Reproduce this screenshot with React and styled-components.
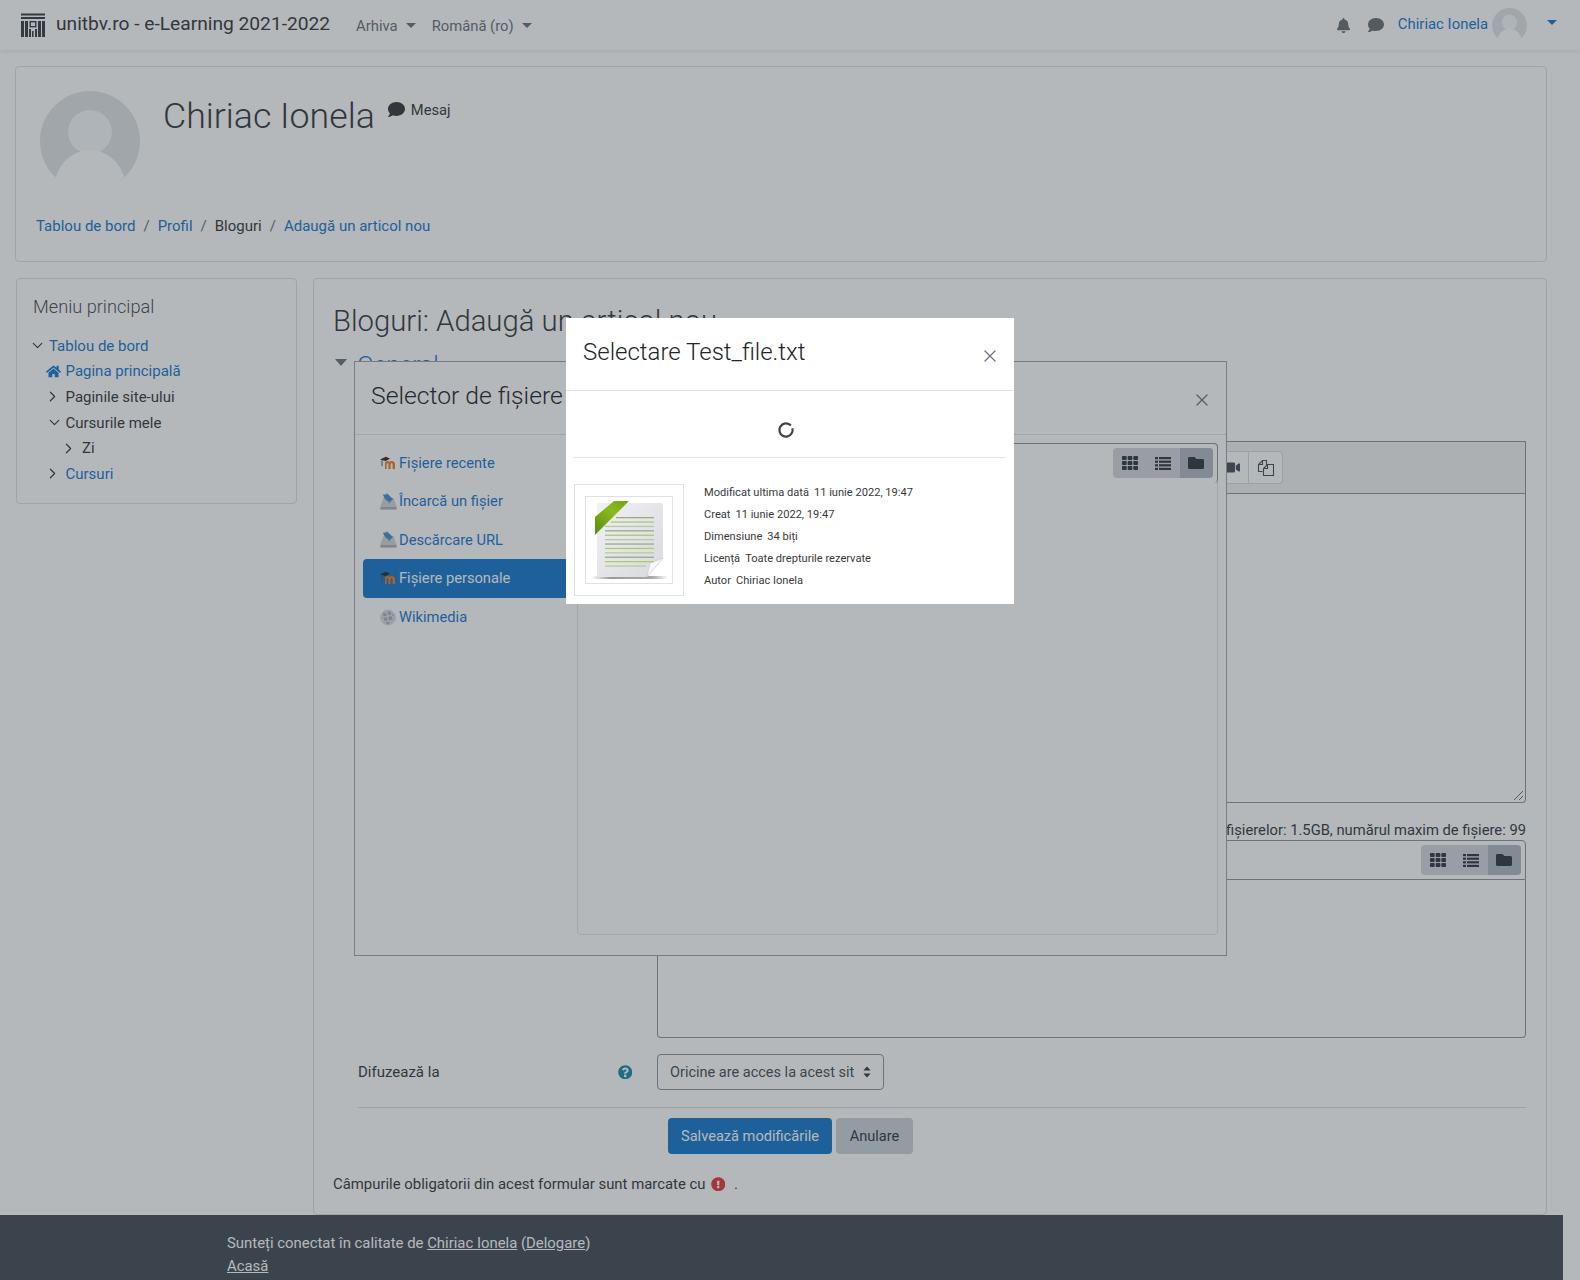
import React from "react";
import styled, { createGlobalStyle } from "styled-components";
import {
  FaBell,
  FaComment,
  FaHome,
  FaTh,
  FaFolder,
  FaVideo,
  FaQuestionCircle,
  FaExclamationCircle,
} from "react-icons/fa";
import { ChevronDown, ChevronRight, X } from "lucide-react";

const GlobalStyle = createGlobalStyle`
  html, body {
    margin: 0;
    padding: 0;
    background: #fff;
    height: 1280px;
    overflow: hidden;
  }
  body {
    font-family: "Roboto", "Liberation Sans", sans-serif;
    font-size: 15px;
    color: #373a3c;
  }
  * { box-sizing: border-box; }
`;

const LINK = "#1a78cc";

const Page = styled.div`
  position: relative;
  width: 1580px;
  height: 1280px;
  overflow: hidden;
`;

const Navbar = styled.nav`
  display: flex;
  align-items: center;
  height: 50px;
  padding: 0 23px 0 21px;
  background: #fff;
  box-shadow: 0 2px 4px rgba(0, 0, 0, 0.08);
`;

const Brand = styled.span`
  margin-left: 11px;
  font-size: 19.2px;
  color: #373a3c;
  margin-top: -3px;
`;

const NavMenu = styled.span`
  display: inline-flex;
  align-items: center;
  margin-left: ${(p) => p.$gap}px;
  font-size: 14.8px;
  color: #6a737b;
  margin-top: 1px;
`;

const Caret = styled.i`
  display: inline-block;
  width: 0;
  height: 0;
  margin-left: 8px;
  border-left: 5px solid transparent;
  border-right: 5px solid transparent;
  border-top: 5px solid ${(p) => p.$color || "#6a737b"};
  margin-top: ${(p) => p.$top || 0}px;
`;

const NavRight = styled.div`
  display: flex;
  align-items: center;
  margin-left: auto;
`;

const NavIcon = styled.span`
  display: inline-flex;
  margin-right: ${(p) => p.$gap}px;
  color: #6a6f74;
  font-size: ${(p) => p.$size}px;
`;

const UserName = styled.a`
  font-size: 14.9px;
  color: ${LINK};
  margin-top: -3px;
`;

const NavAvatar = styled.span`
  display: inline-flex;
  margin: 0 12px 0 4px;
`;

const Content = styled.div`
  width: 1563px;
  padding: 16px 16px 0 15px;
`;

const Card = styled.div`
  background: #fff;
  border: 1px solid #dcdfe2;
  border-radius: 4px;
`;

const HeaderCard = styled(Card)`
  height: 196px;
  padding: 24px 24px 0 20px;
`;

const HeaderTop = styled.div`
  display: flex;
  align-items: flex-start;
  padding-left: 4px;
  height: 124px;
`;

const UserTitle = styled.h1`
  margin: 3px 0 0 23px;
  font-size: 35.7px;
  line-height: 44px;
  font-weight: 300;
  color: #373a3c;
`;

const MessageLink = styled.span`
  display: inline-flex;
  align-items: center;
  margin: 10px 0 0 13px;
  font-size: 14.7px;
  color: #373a3c;
  svg {
    font-size: 17px;
    margin-right: 6px;
    margin-top: -2px;
  }
`;

const Breadcrumb = styled.div`
  display: flex;
  align-items: center;
  margin-top: 2px;
  font-size: 15px;
`;

const Crumb = styled.a`
  color: ${(p) => (p.$plain ? "#373a3c" : LINK)};
`;

const Slash = styled.span`
  margin: 0 8px;
  color: #6c757d;
`;

const Columns = styled.div`
  display: flex;
  align-items: flex-start;
  gap: 16px;
  margin-top: 16px;
`;

const SideCard = styled(Card)`
  width: 281px;
  height: 226px;
  margin-left: 1px;
  padding: 15px 16px 0;
`;

const SideTitle = styled.h5`
  margin: 0 0 13px;
  font-size: 18.2px;
  line-height: 26px;
  font-weight: 300;
  color: #495057;
`;

const TreeRow = styled.div`
  display: flex;
  align-items: center;
  height: 25.6px;
  padding-left: ${(p) => p.$level * 16.5}px;
  font-size: 15px;
  color: ${(p) => (p.$link ? LINK : "#373a3c")};
`;

const TreeIcon = styled.span`
  display: inline-flex;
  width: 16px;
  color: #373a3c;
  svg {
    flex: none;
    margin-left: ${(p) => (p.$right ? -6 : -4)}px;
  }
`;

const HomeIcon = styled.span`
  display: inline-flex;
  width: 16px;
  margin-left: -4px;
  margin-right: 4px;
  font-size: 15px;
  color: ${LINK};
`;

const MainCard = styled(Card)`
  flex: 1;
  height: 937px;
  padding: 22px 20px 0 19px;
`;

const PageTitle = styled.h2`
  margin: 0;
  font-size: 29.3px;
  line-height: 40px;
  font-weight: 300;
  color: #373a3c;
`;

const SectionHead = styled.div`
  display: flex;
  align-items: center;
  height: 34px;
  margin-top: 6px;
  font-size: 24.4px;
  font-weight: 300;
  color: ${LINK};
`;

const SectionCaret = styled.i`
  width: 0;
  height: 0;
  margin: -4px 10px 0 2px;
  border-left: 6px solid transparent;
  border-right: 6px solid transparent;
  border-top: 7px solid #6c757d;
`;

const FormBody = styled.div`
  padding-left: 25px;
`;

const FormRow = styled.div`
  display: grid;
  grid-template-columns: 299px 1fr;
  margin-top: ${(p) => p.$top || 0}px;
`;

const EditorToolbar = styled.div`
  display: flex;
  height: 53px;
  padding: 9px 0 0 558px;
  background: #f3f3f3;
  border: 1px solid #8f9499;
`;

const ToolGroup = styled.div`
  display: flex;
  height: 33px;
  background: #fff;
  border: 1px solid #d8dadd;
  border-radius: 4px;
`;

const ToolButton = styled.span`
  display: inline-flex;
  align-items: center;
  justify-content: center;
  width: ${(p) => p.$w}px;
  color: #495057;
  font-size: 15px;
  & + & {
    border-left: 1px solid #d8dadd;
  }
`;

const EditArea = styled.div`
  position: relative;
  height: 309px;
  border: 1px solid #8f9499;
  border-top: 0;
  border-radius: 0 0 4px 4px;
`;

const Grip = styled.svg`
  position: absolute;
  right: 1px;
  bottom: 1px;
`;

const LimitNote = styled.div`
  margin-top: 17px;
  height: 20px;
  line-height: 20px;
  text-align: right;
  font-size: 14.75px;
  color: #373a3c;
`;

const FileToolbar = styled.div`
  display: flex;
  justify-content: flex-end;
  align-items: center;
  height: 40px;
  padding-right: 4px;
  border: 1px solid #8f9499;
  border-radius: 4px 4px 0 0;
`;

const ViewGroup = styled.div`
  display: flex;
  height: 30px;
  border-radius: 4px;
  overflow: hidden;
  background: #d4d8dc;
`;

const ViewButton = styled.span`
  display: inline-flex;
  align-items: center;
  justify-content: center;
  width: 33.3px;
  font-size: 16px;
  color: #343a40;
  background: ${(p) => (p.$active ? "#b3bac2" : "transparent")};
`;

const FileArea = styled.div`
  height: 158px;
  border: 1px solid #8f9499;
  border-top: 0;
  border-radius: 0 0 4px 4px;
`;

const FieldLabel = styled.div`
  display: flex;
  align-items: center;
  justify-content: space-between;
  padding-right: 25px;
  font-size: 15px;
  color: #373a3c;
`;

const HelpIcon = styled.span`
  display: inline-flex;
  font-size: 14.5px;
  color: #198da8;
`;

const SelectBox = styled.div`
  display: inline-flex;
  align-items: center;
  justify-content: space-between;
  width: 227px;
  height: 36px;
  padding: 0 12px;
  border: 1px solid #8f9499;
  border-radius: 4px;
  font-size: 14.5px;
  color: #495057;
`;

const UpDown = styled.svg`
  flex: none;
`;

const Divider = styled.div`
  height: 1px;
  margin-top: 17px;
  background: #dcdfe2;
`;

const ButtonRow = styled.div`
  display: flex;
  gap: 4px;
  margin: 10px 0 0 310px;
`;

const Button = styled.span`
  display: inline-flex;
  align-items: center;
  justify-content: center;
  width: ${(p) => p.$w}px;
  height: 36px;
  border-radius: 4px;
  font-size: 14.6px;
  background: ${(p) => (p.$primary ? LINK : "#ced4da")};
  color: ${(p) => (p.$primary ? "#fff" : "#373a3c")};
`;

const RequiredNote = styled.div`
  display: flex;
  align-items: center;
  margin-top: 21px;
  font-size: 14.9px;
  color: #373a3c;
`;

const RequiredIcon = styled.span`
  display: inline-flex;
  margin: 0 9px 0 5px;
  font-size: 14.5px;
  color: #e63a3a;
`;

const Footer = styled.footer`
  width: 1563px;
  height: 70px;
  padding: 17px 0 0 227px;
  background: #454c55;
  color: #fff;
  font-size: 14.9px;
  line-height: 23px;
`;

const FootLink = styled.a`
  color: #fff;
  text-decoration: underline;
`;

const Dialog = styled.div`
  position: absolute;
  left: ${(p) => p.$left}px;
  top: ${(p) => p.$top}px;
  width: ${(p) => p.$w}px;
  height: ${(p) => p.$h}px;
  background: #fff;
`;

const PickerDialog = styled(Dialog)`
  border: 1px solid #9fa4a9;
  z-index: 2;
`;

const DialogHead = styled.div`
  display: flex;
  align-items: center;
  justify-content: space-between;
  height: ${(p) => p.$h}px;
  padding: ${(p) => p.$pad};
  border-bottom: 1px solid #dee2e6;
`;

const DialogTitle = styled.h3`
  margin: -5px 0 0;
  font-size: ${(p) => p.$size}px;
  font-weight: 300;
  color: #212529;
`;

const CloseIcon = styled.span`
  display: inline-flex;
  color: #6c757d;
  margin-top: 3px;
`;

const PickerBody = styled.div`
  display: flex;
  padding: 8.4px 8px 0 8px;
`;

const RepoList = styled.ul`
  width: 214px;
  flex: none;
  margin: 0;
  padding: 0;
  list-style: none;
`;

const RepoItem = styled.li`
  display: flex;
  align-items: center;
  gap: 2px;
  height: 38.6px;
  padding-left: 16px;
  border-radius: 4px 0 0 4px;
  font-size: 14.7px;
  background: ${(p) => (p.$active ? LINK : "transparent")};
  color: ${(p) => (p.$active ? "#fff" : LINK)};
`;

const RepoIcon = styled.span`
  display: inline-flex;
  justify-content: center;
  width: 18px;
`;

const PickerContent = styled.div`
  flex: 1;
  height: 492px;
  border: 1px solid #e3e5e7;
  border-radius: 4px;
`;

const PickerToolbar = styled.div`
  display: flex;
  justify-content: flex-end;
  height: 40px;
  margin: -1px -1px 0 -1px;
  padding: 4px 4px 0 0;
  border: 1px solid #8f9499;
  border-left: 0;
  border-bottom: 0;
  border-radius: 0 4px 4px 0;
`;

const Backdrop = styled.div`
  position: absolute;
  inset: 0;
  z-index: 5;
  background: rgba(41, 52, 61, 0.35);
`;

const FileDialog = styled(Dialog)`
  z-index: 6;
  padding-bottom: 8px;
`;

const SpinnerRow = styled.div`
  display: flex;
  align-items: center;
  justify-content: center;
  height: 67px;
  margin: 0 8px;
  padding: 12px 9px 0 0;
  border-bottom: 1px solid #e3e5e7;
`;

const FileInfo = styled.div`
  display: flex;
  margin: 26px 8px 0;
`;

const Thumb = styled.div`
  display: flex;
  align-items: center;
  justify-content: center;
  width: 110px;
  height: 112px;
  border: 1px solid #dee2e6;
`;

const ThumbInner = styled.div`
  display: flex;
  width: 88px;
  height: 88px;
  border: 1px solid #dee2e6;
`;

const InfoList = styled.dl`
  margin: -2px 0 0 20px;
  font-size: 11.1px;
  line-height: 22px;
  color: #373a3c;
`;

const InfoRow = styled.div`
  display: flex;
  gap: 5px;
`;

const InfoKey = styled.dt`
  margin: 0;
`;

const InfoValue = styled.dd`
  margin: 0;
`;

const Avatar = ({ size }) => (
  <svg width={size} height={size} viewBox="0 0 100 100">
    <defs>
      <clipPath id={`avatar-${size}`}>
        <circle cx="50" cy="50" r="50" />
      </clipPath>
    </defs>
    <g clipPath={`url(#avatar-${size})`}>
      <rect width="100" height="100" fill="#e2e4e6" />
      <circle cx="50" cy="41" r="22" fill="#f8f9fa" />
      <ellipse cx="50" cy="98" rx="36" ry="39" fill="#fff" />
    </g>
    <rect x="0" y="92" width="100" height="8" fill="#fff" />
  </svg>
);

const Logo = () => (
  <svg width="24" height="24" viewBox="0 0 24 24" fill="#3a3f44">
    <rect x="0" y="0.5" width="24" height="2" />
    <rect x="0" y="4" width="24" height="2" />
    <rect x="0" y="8" width="3" height="16" />
    <rect x="4" y="8" width="3" height="16" />
    <rect x="8" y="16" width="2" height="8" />
    <rect x="9.2" y="8.7" width="5.6" height="5" fill="none" stroke="#3a3f44" strokeWidth="1.4" />
    <rect x="11" y="18" width="1.6" height="6" />
    <rect x="14" y="16" width="2" height="8" />
    <rect x="17" y="8" width="3" height="16" />
    <rect x="21" y="8" width="3" height="16" />
  </svg>
);

const MoodleIcon = () => (
  <svg width="17" height="14" viewBox="0 0 17 14">
    <path d="M0 3.6 6 .8l4 2-4.5 2.2z" fill="#2a2a2a" />
    <path d="M2 4.2v6" stroke="#555" strokeWidth="1" fill="none" />
    <path
      d="M5 13V7.5c0-1.6 1-2.5 2.4-2.5.9 0 1.6.4 2 1 .5-.6 1.2-1 2.2-1C13.3 5 15 6 15 8v5h-2.4V8.5c0-.8-.4-1.2-1-1.2s-1 .4-1 1.2V13H8.4V8.5c0-.8-.4-1.2-.9-1.2s-.9.4-.9 1.2V13z"
      fill="#f07c1e"
    />
  </svg>
);

const UploadIcon = () => (
  <svg width="17" height="17" viewBox="0 0 17 17">
    <path d="M0.5 16.5V13L3.5 5h10l3 8v3.5z" fill="#d3d6d8" />
    <rect x="0.5" y="14" width="16" height="2.5" fill="#b0b3b6" />
    <path d="M3 1.5h3.5V0l6.5 6-4.5 4.6V8C6 8 4 5 3 1.5z" fill="#4a8fcf" />
  </svg>
);

const WikiIcon = () => (
  <svg width="16" height="17" viewBox="0 0 16 17">
    <circle cx="8" cy="8.5" r="7.9" fill="#dcdee0" />
    <path d="M3 4h3l.8 3H3.2zM7.6 2.5h3l.6 3.2H8zM3.4 8.5h3.5l.4 3.2H4.6zM8.4 7.5h3.6l.5 3.4H8.8zM6 12.9h3.4v2.4H6.4z" fill="#aeb1b4" />
    <path d="M12.5 4.1l1.6 2.6-1.6.4z" fill="#aeb1b4" />
  </svg>
);

const CopyIcon = () => (
  <svg width="18" height="18" viewBox="0 0 18 18" fill="none" stroke="#495057" strokeWidth="1.1">
    <path d="M5.5 12.5H1.5V5.5L5.5 1.5h4V6" />
    <path d="M1.5 5.5h4v-4" />
    <path d="M6.5 16.5V9.5L10.5 5.5h6v11z" />
    <path d="M6.5 9.5h4v-4" />
  </svg>
);

const ListIcon = () => (
  <svg width="16" height="13" viewBox="0 0 16 13" fill="currentColor">
    {[0, 3.6, 7.2, 10.8].map((y) => (
      <React.Fragment key={y}>
        <rect x="0" y={y} width="3" height="2.2" />
        <rect x="4" y={y} width="12" height="2.2" />
      </React.Fragment>
    ))}
  </svg>
);

const Spinner = () => (
  <svg width="18" height="18" viewBox="0 0 18 18">
    <circle cx="9" cy="9" r="6.6" fill="none" stroke="#3f4347" strokeWidth="2.2" strokeDasharray="38 3.5" transform="rotate(-15 9 9)" />
  </svg>
);

const lineRows = Array.from({ length: 12 }, (_, i) => ({
  y: 20 + i * 4.4,
  x: i === 0 ? 30 : i === 1 ? 25 : 19,
  end: i === 11 ? 60 : 68,
  fill: i % 3 === 1 ? "#a9cb6e" : i % 3 === 2 ? "#b6c9a0" : "#97ab85",
}));

const DocThumb = () => (
  <svg width="86" height="86" viewBox="0 0 86 86">
    <defs>
      <linearGradient id="sheet" x1="0" y1="0" x2="1" y2="1">
        <stop offset="0" stopColor="#f0f0f6" />
        <stop offset="1" stopColor="#d8d9dc" />
      </linearGradient>
      <linearGradient id="ribbon" x1="0" y1="1" x2="1" y2="0">
        <stop offset="0" stopColor="#568c0c" />
        <stop offset="0.6" stopColor="#8cba1e" />
        <stop offset="1" stopColor="#6da214" />
      </linearGradient>
      <linearGradient id="shade" x1="0" y1="0" x2="1" y2="0">
        <stop offset="0" stopColor="#fff" />
        <stop offset="0.25" stopColor="#999" />
        <stop offset="0.8" stopColor="#aaa" />
        <stop offset="1" stopColor="#fff" />
      </linearGradient>
    </defs>
    <rect x="5" y="79" width="77" height="3" fill="url(#shade)" />
    <path d="M13 6h62a2 2 0 0 1 2 2v53L61 80H13a2 2 0 0 1-2-2V8a2 2 0 0 1 2-2z" fill="url(#sheet)" />
    <path d="M61 80 64 66 77 61z" fill="#f7f7f7" stroke="#c4c5c9" strokeWidth="0.6" />
    {lineRows.map((row) => (
      <rect key={row.y} x={row.x} y={row.y} width={row.end - row.x} height="1.3" fill={row.fill} />
    ))}
    <path d="M9 38V20L28 4H43z" fill="url(#ribbon)" />
  </svg>
);

const treeRows = [
  { level: 0, icon: "down", text: "Tablou de bord", link: true },
  { level: 1, icon: "home", text: "Pagina principală", link: true },
  { level: 1, icon: "right", text: "Paginile site-ului" },
  { level: 1, icon: "down", text: "Cursurile mele" },
  { level: 2, icon: "right", text: "Zi" },
  { level: 1, icon: "right", text: "Cursuri", link: true },
];

const repos = [
  { text: "Fișiere recente", icon: <MoodleIcon /> },
  { text: "Încarcă un fișier", icon: <UploadIcon /> },
  { text: "Descărcare URL", icon: <UploadIcon /> },
  { text: "Fișiere personale", icon: <MoodleIcon />, active: true },
  { text: "Wikimedia", icon: <WikiIcon /> },
];

const fileInfo = [
  ["Modificat ultima dată", "11 iunie 2022, 19:47"],
  ["Creat", "11 iunie 2022, 19:47"],
  ["Dimensiune", "34 biți"],
  ["Licență", "Toate drepturile rezervate"],
  ["Autor", "Chiriac Ionela"],
];

const ViewButtons = () => (
  <ViewGroup>
    <ViewButton><FaTh /></ViewButton>
    <ViewButton><ListIcon /></ViewButton>
    <ViewButton $active><FaFolder /></ViewButton>
  </ViewGroup>
);

export default function App() {
  return (
    <Page>
      <GlobalStyle />
      <Navbar>
        <Logo />
        <Brand>unitbv.ro - e-Learning 2021-2022</Brand>
        <NavMenu $gap={26}>Arhiva<Caret /></NavMenu>
        <NavMenu $gap={16}>Română (ro)<Caret /></NavMenu>
        <NavRight>
          <NavIcon $size={15} $gap={17}><FaBell /></NavIcon>
          <NavIcon $size={16} $gap={14}><FaComment /></NavIcon>
          <UserName>Chiriac Ionela</UserName>
          <NavAvatar><Avatar size={35} /></NavAvatar>
          <Caret $color={LINK} $top={-6} />
        </NavRight>
      </Navbar>

      <Content>
        <HeaderCard>
          <HeaderTop>
            <Avatar size={100} />
            <UserTitle>Chiriac Ionela</UserTitle>
            <MessageLink><FaComment />Mesaj</MessageLink>
          </HeaderTop>
          <Breadcrumb>
            <Crumb>Tablou de bord</Crumb>
            <Slash>/</Slash>
            <Crumb>Profil</Crumb>
            <Slash>/</Slash>
            <Crumb $plain>Bloguri</Crumb>
            <Slash>/</Slash>
            <Crumb>Adaugă un articol nou</Crumb>
          </Breadcrumb>
        </HeaderCard>

        <Columns>
          <SideCard>
            <SideTitle>Meniu principal</SideTitle>
            {treeRows.map((row) => (
              <TreeRow key={row.text} $level={row.level} $link={row.link}>
                {row.icon === "home" ? (
                  <HomeIcon><FaHome /></HomeIcon>
                ) : (
                  <TreeIcon $right={row.icon === "right"}>
                    {row.icon === "down" ? (
                      <ChevronDown size={17} strokeWidth={1.7} />
                    ) : (
                      <ChevronRight size={17} strokeWidth={1.7} />
                    )}
                  </TreeIcon>
                )}
                {row.text}
              </TreeRow>
            ))}
          </SideCard>

          <MainCard>
            <PageTitle>Bloguri: Adaugă un articol nou</PageTitle>
            <SectionHead><SectionCaret />General</SectionHead>
            <FormBody>
              <FormRow $top={60}>
                <span />
                <div>
                  <EditorToolbar>
                    <ToolGroup>
                      <ToolButton $w={31}><FaVideo /></ToolButton>
                      <ToolButton $w={34}><CopyIcon /></ToolButton>
                    </ToolGroup>
                  </EditorToolbar>
                  <EditArea>
                    <Grip width="12" height="12" viewBox="0 0 12 12" fill="none" stroke="#6c7176">
                      <path d="M2 11 11 2M7 11l4-4" />
                    </Grip>
                  </EditArea>
                  <LimitNote>fișierelor: 1.5GB, numărul maxim de fișiere: 99</LimitNote>
                  <FileToolbar><ViewButtons /></FileToolbar>
                  <FileArea />
                </div>
              </FormRow>
              <FormRow $top={16}>
                <FieldLabel>
                  Difuzează la
                  <HelpIcon><FaQuestionCircle /></HelpIcon>
                </FieldLabel>
                <div>
                  <SelectBox>
                    Oricine are acces la acest sit
                    <UpDown width="8" height="12" viewBox="0 0 8 12" fill="#343a40">
                      <path d="M4 0.5 7.6 4.6H.4zM4 11.5.4 7.4h7.2z" />
                    </UpDown>
                  </SelectBox>
                </div>
              </FormRow>
              <Divider />
              <ButtonRow>
                <Button $primary $w={164}>Salvează modificările</Button>
                <Button $w={77}>Anulare</Button>
              </ButtonRow>
            </FormBody>
            <RequiredNote>
              Câmpurile obligatorii din acest formular sunt marcate cu
              <RequiredIcon><FaExclamationCircle /></RequiredIcon>.
            </RequiredNote>
          </MainCard>
        </Columns>
      </Content>

      <Footer>
        Sunteți conectat în calitate de <FootLink>Chiriac Ionela</FootLink> (<FootLink>Delogare</FootLink>)
        <br />
        <FootLink>Acasă</FootLink>
      </Footer>

      <PickerDialog $left={354} $top={361} $w={873} $h={595}>
        <DialogHead $h={73} $pad="0 14px 0 16px">
          <DialogTitle $size={24.7}>Selector de fișiere</DialogTitle>
          <CloseIcon><X size={20} strokeWidth={1.5} /></CloseIcon>
        </DialogHead>
        <PickerBody>
          <RepoList>
            {repos.map((repo) => (
              <RepoItem key={repo.text} $active={repo.active}>
                <RepoIcon>{repo.icon}</RepoIcon>
                {repo.text}
              </RepoItem>
            ))}
          </RepoList>
          <PickerContent>
            <PickerToolbar><ViewButtons /></PickerToolbar>
          </PickerContent>
        </PickerBody>
      </PickerDialog>

      <Backdrop />

      <FileDialog $left={566} $top={318} $w={448} $h={286}>
        <DialogHead $h={73} $pad="0 14px 0 17px">
          <DialogTitle $size={24}>Selectare Test_file.txt</DialogTitle>
          <CloseIcon><X size={20} strokeWidth={1.5} /></CloseIcon>
        </DialogHead>
        <SpinnerRow><Spinner /></SpinnerRow>
        <FileInfo>
          <Thumb>
            <ThumbInner><DocThumb /></ThumbInner>
          </Thumb>
          <InfoList>
            {fileInfo.map(([key, value]) => (
              <InfoRow key={key}>
                <InfoKey>{key}</InfoKey>
                <InfoValue>{value}</InfoValue>
              </InfoRow>
            ))}
          </InfoList>
        </FileInfo>
      </FileDialog>
    </Page>
  );
}
